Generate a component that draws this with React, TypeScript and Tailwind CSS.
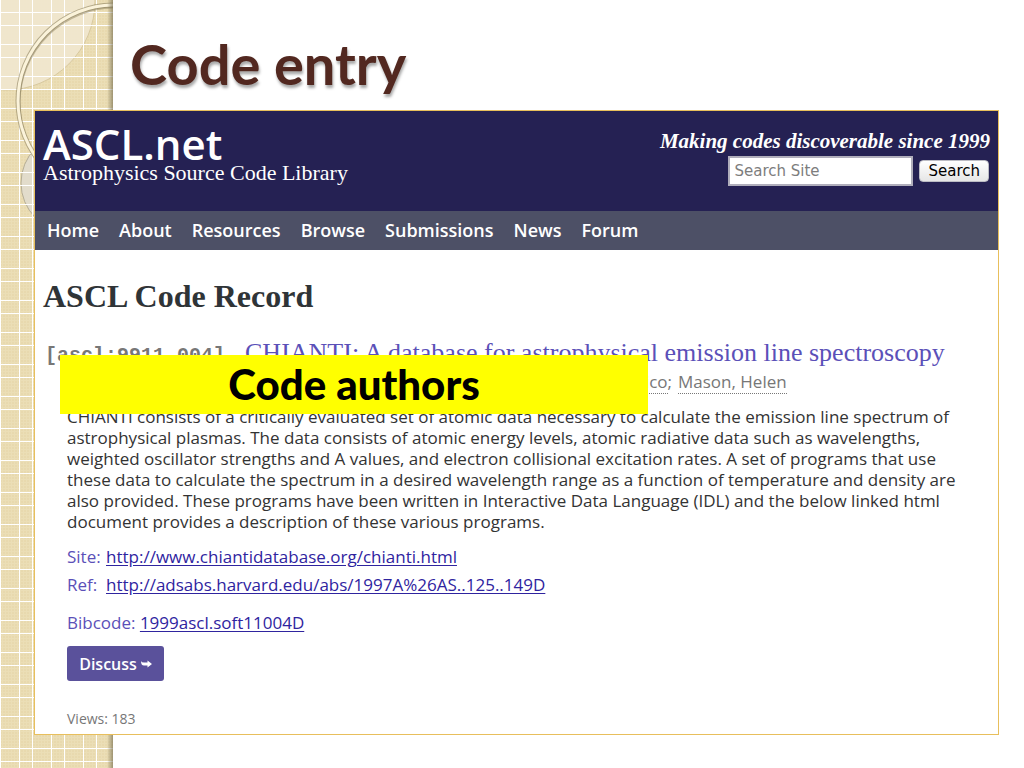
const navItems = ['Home', 'About', 'Resources', 'Browse', 'Submissions', 'News', 'Forum'];

const description = [
    'CHIANTI consists of a critically evaluated set of atomic data necessary to calculate the emission line spectrum of',
    'astrophysical plasmas. The data consists of atomic energy levels, atomic radiative data such as wavelengths,',
    'weighted oscillator strengths and A values, and electron collisional excitation rates. A set of programs that use',
    'these data to calculate the spectrum in a desired wavelength range as a function of temperature and density are',
    'also provided. These programs have been written in Interactive Data Language (IDL) and the below linked html',
    'document provides a description of these various programs.',
];

function SlideBorder() {
    return (
        <div className="absolute inset-y-0 left-0 w-[113px] overflow-hidden bg-[#ebdeb6]">
            <svg className="h-full w-full" aria-hidden="true">
                <defs>
                    <pattern id="weave" width="6" height="6" patternUnits="userSpaceOnUse">
                        <path d="M0 1h2M3 4h2M1 3v2M4 0v2" stroke="#dfcb98" strokeWidth="1" fill="none" opacity="0.5" />
                    </pattern>
                    <pattern id="plaid" width="32" height="32" patternUnits="userSpaceOnUse">
                        <path d="M0.5 0v32M19.5 0v32M0 12.5h32M0 25.5h32" stroke="#ffffff" strokeWidth="1" fill="none" />
                    </pattern>
                    <linearGradient id="edge">
                        <stop offset="0" stopColor="#6b6448" stopOpacity="0" />
                        <stop offset="1" stopColor="#6b6448" stopOpacity="0.6" />
                    </linearGradient>
                </defs>
                <rect width="113" height="100%" fill="url(#weave)" />
                {/* Pale disc in the corner */}
                <circle cx="6" cy="1" r="89" fill="#f1e7cf" fillOpacity="0.9" stroke="#d8c9a0" />
                {/* Small disc tucked behind the panel */}
                <circle cx="70" cy="183" r="49" fill="#e2dccb" stroke="#b5ad94" />
                <rect width="113" height="100%" fill="url(#plaid)" />
                {/* Ring */}
                <circle cx="114" cy="101" r="96" fill="none" stroke="#8f8460" strokeWidth="5" opacity="0.6" />
                <circle cx="115" cy="103" r="96" fill="none" stroke="#8f8460" strokeWidth="3" opacity="0.5" />
                <circle cx="114" cy="101" r="96" fill="none" stroke="#fbf3da" strokeWidth="3" />
                <rect x="107" width="6" height="100%" fill="url(#edge)" />
            </svg>
        </div>
    );
}

function SiteHeader() {
    return (
        <header>
            <div className="flex h-[100px] justify-between bg-[#252153] pr-2 pl-2 text-white">
                <div className="pt-3">
                    <div className="font-['Open_Sans'] text-[42px] leading-[42px] font-semibold">ASCL.net</div>
                    <div className="font-['Liberation_Serif'] text-[22px] leading-4">Astrophysics Source Code Library</div>
                </div>
                <div className="flex flex-col items-end pt-[15px]">
                    <p className="font-['Liberation_Serif'] text-[21px] leading-[30px] font-bold italic">
                        Making codes discoverable since 1999
                    </p>
                    <form className="flex items-center gap-[6px] pr-px" onSubmit={(e) => e.preventDefault()}>
                        <input
                            type="text"
                            aria-label="Search Site"
                            placeholder="Search Site"
                            className="h-[30px] w-[185px] border-2 border-[#b0aebb] bg-white px-1 font-['DejaVu_Sans'] text-[15px] text-black placeholder:text-[#7d7d7d]"
                        />
                        <button
                            type="submit"
                            className="h-[22px] rounded border border-[#bcbcc4] bg-linear-to-b from-white to-[#e6e6e6] px-2 font-['DejaVu_Sans'] text-[15px] leading-5 text-black"
                        >
                            Search
                        </button>
                    </form>
                </div>
            </div>
            <nav className="flex h-[39px] items-center gap-5 bg-[#4d5066] px-3 font-['Open_Sans'] text-[18px] font-semibold text-white">
                {navItems.map((item) => (
                    <a key={item} href="#">
                        {item}
                    </a>
                ))}
            </nav>
        </header>
    );
}

function CodeRecord() {
    return (
        <div className="font-['Open_Sans'] text-[17px] font-medium text-[#333]">
            <h2 className="px-2 pt-6 font-['Liberation_Serif'] text-[32px] leading-[44px] font-bold text-[#2f3437]">
                ASCL Code Record
            </h2>

            <div className="relative pt-5">
                <div className="flex items-baseline gap-5 px-[10px] leading-[30px] whitespace-nowrap">
                    <span className="font-['Liberation_Mono'] text-[20px] font-bold text-[#777]">[ascl:9911.004]</span>
                    <a href="#" className="font-['Liberation_Serif'] text-[26px] font-normal text-[#5b50b8]">
                        CHIANTI: A database for astrophysical emission line spectroscopy
                    </a>
                </div>
                <div className="flex pl-8 leading-[22px] whitespace-nowrap text-[#777]">
                    <div className="w-[605px] text-right">
                        <a href="#" className="border-b border-dotted border-[#777]">
                            Landi, Enrico
                        </a>
                        ;
                    </div>
                    <a href="#" className="ml-[6px] border-b border-dotted border-[#777]">
                        Mason, Helen
                    </a>
                </div>

                {/* Callout over the author line */}
                <div className="absolute top-[37px] left-[25px] flex h-[59px] w-[588px] items-center justify-center bg-[#ffff00] font-['Lato'] text-[42px] font-black text-black">
                    Code authors
                </div>
            </div>

            <div className="px-8">
                <p className="pt-3 leading-[21px] whitespace-nowrap">
                    {description.map((line) => (
                        <span key={line} className="block">
                            {line}
                        </span>
                    ))}
                </p>
                <div className="pt-[11px] leading-7 text-[#5b50b8]">
                    <p>
                        <span className="inline-block w-[39px]">Site:</span>
                        <a href="#" className="text-[#2f249f] underline underline-offset-2">
                            http://www.chiantidatabase.org/chianti.html
                        </a>
                    </p>
                    <p>
                        <span className="inline-block w-[39px]">Ref:</span>
                        <a href="#" className="text-[#2f249f] underline underline-offset-2">
                            http://adsabs.harvard.edu/abs/1997A%26AS..125..149D
                        </a>
                    </p>
                    <p className="pt-[10px]">
                        Bibcode:{' '}
                        <a href="#" className="text-[#2f249f] underline underline-offset-2">
                            1999ascl.soft11004D
                        </a>
                    </p>
                </div>
                <button
                    type="button"
                    className="mt-[9px] flex h-[35px] w-[97px] items-center justify-center gap-1 rounded-[3px] bg-[#5a519b] text-[16px] font-semibold text-white"
                >
                    Discuss
                    <svg className="h-2 w-[11px]" viewBox="0 0 11 8" fill="currentColor" aria-hidden="true">
                        <path d="M0 1Q0.500 2.500 3 2.500H6.500V0.500L11 4 6.500 7.500V5.500H3Q0 5.500 0 1z" />
                    </svg>
                </button>
                <p className="pt-7 text-[14px] leading-5 text-[#777]">Views: 183</p>
            </div>
        </div>
    );
}

export default function App() {
    return (
        <div className="relative min-h-screen bg-white">
            <SlideBorder />
            <div className="relative pb-8">
                <h1 className="pt-[18px] pl-[130px] font-['Lato'] text-[56px] leading-[92px] font-bold text-[#522820] [text-shadow:1px_3px_3px_#00000059]">
                    Code entry
                </h1>
                <main className="mr-[25px] ml-[34px] min-h-[625px] border border-[#e8bf5c] bg-white">
                    <SiteHeader />
                    <CodeRecord />
                </main>
            </div>
        </div>
    );
}
